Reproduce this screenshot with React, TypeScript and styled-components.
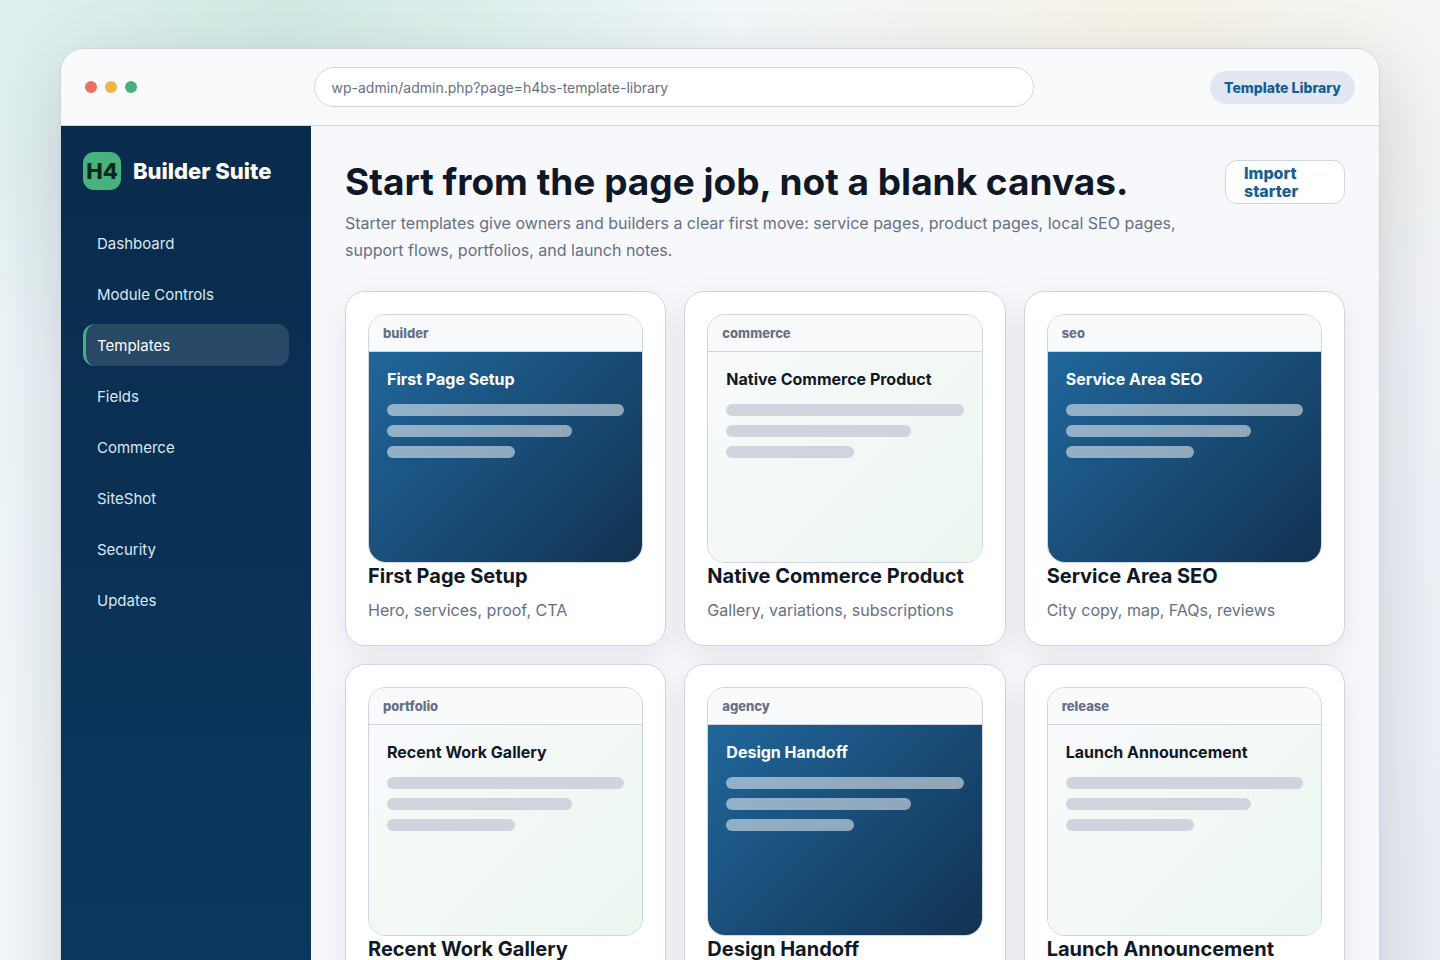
import React from "react";
import styled, { createGlobalStyle, css } from "styled-components";

const GlobalStyle = createGlobalStyle`
  *, *::before, *::after { box-sizing: border-box; }
  body {
    margin: 0;
    color: #101828;
    font-family: Inter, "Liberation Sans", sans-serif;
  }
  h1, h2, p { margin: 0; }
  button, input { font-family: inherit; }
`;

const Stage = styled.div`
  height: 100vh;
  overflow: hidden;
  padding: 48px 60px 0;
  background:
    radial-gradient(circle at 20% 0%, rgba(72, 178, 126, 0.18), transparent 30%),
    radial-gradient(circle at 80% 0%, rgba(240, 190, 70, 0.12), transparent 28%),
    linear-gradient(135deg, #eaf4f8 0%, #f6f9fc 48%, #ebeff6 100%);
`;

const BrowserFrame = styled.div`
  display: flex;
  flex-direction: column;
  min-height: 1120px;
  border: 1px solid #d0d5dd;
  border-radius: 24px;
  overflow: hidden;
  background: #f7f8fc;
  box-shadow: 0 28px 80px rgba(16, 24, 40, 0.18);
`;

const TopBar = styled.header`
  display: flex;
  align-items: center;
  justify-content: space-between;
  padding: 18px 24px;
  border-bottom: 1px solid #d0d5dd;
  background: #f9fafc;
`;

const Dots = styled.div`
  display: flex;
  gap: 8px;
`;

const Dot = styled.span<{ $color: string }>`
  width: 12px;
  height: 12px;
  border-radius: 50%;
  background: ${(p) => p.$color};
`;

const Address = styled.input`
  flex: 0 1 720px;
  height: 40px;
  padding: 0 17px;
  border: 1px solid #d0d5dd;
  border-radius: 20px;
  outline: none;
  background: #fff;
  color: #667085;
  font-size: 14px;
`;

const Badge = styled.span`
  padding: 8px 14px;
  border-radius: 17px;
  background: #e1e8f1;
  color: #175e96;
  font-size: 14px;
  line-height: 17px;
  font-weight: 800;
`;

const Body = styled.div`
  display: grid;
  flex: 1;
  grid-template-columns: 250px minmax(0, 1fr);
`;

const Sidebar = styled.aside`
  padding: 26px 22px;
  background: linear-gradient(180deg, #092b4c, #0c3b63);
`;

const Brand = styled.div`
  display: flex;
  align-items: center;
  gap: 12px;
  margin-bottom: 32px;
  color: #fff;
  font-size: 22px;
  font-weight: 800;
  white-space: nowrap;
`;

const BrandMark = styled.span`
  display: grid;
  place-items: center;
  width: 38px;
  height: 38px;
  border-radius: 11px;
  background: #48b27e;
  color: #06291d;
`;

const Nav = styled.nav`
  display: grid;
  gap: 9px;
`;

const NavLink = styled.a<{ $active?: boolean }>`
  padding: 13px 14px 11px;
  border-radius: 12px;
  color: #dbe7f3;
  font-size: 15px;
  line-height: 18px;
  text-decoration: none;
  ${(p) =>
    p.$active &&
    css`
      padding-left: 11px;
      border-left: 3px solid #48b27e;
      background: rgba(255, 255, 255, 0.13);
      color: #fff;
    `}
`;

const Main = styled.main`
  padding: 34px;
`;

const Intro = styled.div`
  display: flex;
  align-items: flex-start;
  justify-content: space-between;
  margin-bottom: 27px;
`;

const Headline = styled.h1`
  font-size: 37px;
  line-height: 43px;
  font-weight: 700;
  white-space: nowrap;
`;

const Lead = styled.p`
  max-width: 850px;
  margin-top: 7px;
  color: #667085;
  font-size: 16px;
  line-height: 27px;
`;

const ImportButton = styled.button`
  flex: 0 0 120px;
  height: 44px;
  padding: 0 18px;
  border: 1px solid #d0d5dd;
  border-radius: 12px;
  background: #fff;
  color: #175e96;
  font-size: 16px;
  line-height: 18px;
  font-weight: 800;
  text-align: left;
`;

const CardGrid = styled.div`
  display: grid;
  grid-template-columns: repeat(3, minmax(0, 1fr));
  gap: 18px;
`;

const Card = styled.article`
  height: 355px;
  padding: 22px;
  border: 1px solid #d0d5dd;
  border-radius: 20px;
  background: #fff;
  box-shadow: 0 12px 34px rgba(16, 24, 40, 0.08);
`;

const Preview = styled.div`
  overflow: hidden;
  border: 1px solid #d0d5dd;
  border-radius: 18px;
`;

const PreviewLabel = styled.div`
  padding: 10px 14px;
  border-bottom: 1px solid #d0d5dd;
  background: #f9fafc;
  color: #667085;
  font-size: 13px;
  line-height: 16px;
  font-weight: 800;
`;

const PreviewPage = styled.div<{ $dark: boolean }>`
  display: grid;
  align-content: start;
  gap: 9px;
  height: 210px;
  padding: 18px;
  background: ${(p) =>
    p.$dark
      ? "linear-gradient(135deg, #20679c, #123252)"
      : "linear-gradient(135deg, #f9fafc, #ebf6ef)"};
  color: ${(p) => (p.$dark ? "#fff" : "#101828")};
`;

const PreviewTitle = styled.strong`
  margin-bottom: 7px;
  font-size: 16px;
  line-height: 18px;
  font-weight: 700;
`;

const Bar = styled.span<{ $dark: boolean; $width: number }>`
  width: ${(p) => p.$width}%;
  height: 12px;
  border-radius: 6px;
  background: ${(p) => (p.$dark ? "rgba(255, 255, 255, 0.52)" : "#d0d5dd")};
`;

const CardTitle = styled.h2`
  font-size: 20px;
  line-height: 26px;
  font-weight: 700;
  white-space: nowrap;
`;

const CardText = styled.p`
  margin-top: 8px;
  color: #667085;
  font-size: 16px;
  line-height: 26px;
  white-space: nowrap;
`;

const navItems = [
  "Dashboard",
  "Module Controls",
  "Templates",
  "Fields",
  "Commerce",
  "SiteShot",
  "Security",
  "Updates",
];

type Template = { kind: string; title: string; text?: string; dark: boolean };

const templates: Template[] = [
  { kind: "builder", title: "First Page Setup", text: "Hero, services, proof, CTA", dark: true },
  { kind: "commerce", title: "Native Commerce Product", text: "Gallery, variations, subscriptions", dark: false },
  { kind: "seo", title: "Service Area SEO", text: "City copy, map, FAQs, reviews", dark: true },
  { kind: "portfolio", title: "Recent Work Gallery", dark: false },
  { kind: "agency", title: "Design Handoff", dark: true },
  { kind: "release", title: "Launch Announcement", dark: false },
];

const barWidths = [100, 78, 54];

function TemplateCard({ kind, title, text, dark }: Template) {
  return (
    <Card>
      <Preview>
        <PreviewLabel>{kind}</PreviewLabel>
        <PreviewPage $dark={dark}>
          <PreviewTitle>{title}</PreviewTitle>
          {barWidths.map((w) => (
            <Bar key={w} $dark={dark} $width={w} />
          ))}
        </PreviewPage>
      </Preview>
      <CardTitle>{title}</CardTitle>
      {text && <CardText>{text}</CardText>}
    </Card>
  );
}

export default function App() {
  return (
    <>
      <GlobalStyle />
      <Stage>
        <BrowserFrame>
          <TopBar>
            <Dots>
              <Dot $color="#f07060" />
              <Dot $color="#f0b548" />
              <Dot $color="#48b27e" />
            </Dots>
            <Address
              type="text"
              aria-label="Address"
              readOnly
              value="wp-admin/admin.php?page=h4bs-template-library"
            />
            <Badge>Template Library</Badge>
          </TopBar>
          <Body>
            <Sidebar>
              <Brand>
                <BrandMark>H4</BrandMark>
                <span>Builder Suite</span>
              </Brand>
              <Nav>
                {navItems.map((item) => (
                  <NavLink
                    key={item}
                    href="#"
                    $active={item === "Templates"}
                    aria-current={item === "Templates" ? "page" : undefined}
                  >
                    {item}
                  </NavLink>
                ))}
              </Nav>
            </Sidebar>
            <Main>
              <Intro>
                <div>
                  <Headline>Start from the page job, not a blank canvas.</Headline>
                  <Lead>
                    Starter templates give owners and builders a clear first move: service pages,
                    product pages, local SEO pages, support flows, portfolios, and launch notes.
                  </Lead>
                </div>
                <ImportButton type="button">Import starter</ImportButton>
              </Intro>
              <CardGrid>
                {templates.map((t) => (
                  <TemplateCard key={t.kind} {...t} />
                ))}
              </CardGrid>
            </Main>
          </Body>
        </BrowserFrame>
      </Stage>
    </>
  );
}
